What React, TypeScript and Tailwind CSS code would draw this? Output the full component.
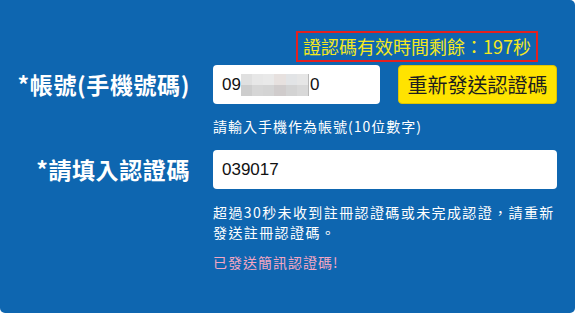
import { useState } from "react"

const FONT = "font-['Microsoft_JhengHei','Noto_Sans_CJK_TC','Noto_Sans',sans-serif]"

// pixelated mask over the middle digits of the phone number
const MASK_CELLS = [
  "#e0e0e0", "#e7e7e7", "#e9e9e9", "#e7e1df", "#e2e4e6", "#e6e6e6",
  "#cdcdcd", "#d6d6d6", "#d4d4d4", "#d0cccc", "#d3d3d3", "#d8d8d8",
]

function MaskedPhone() {
  return (
    <div className="flex h-[39px] w-[167px] items-center rounded-[4px] bg-white pl-[9px] text-[17px] text-[#111] font-['Liberation_Sans',sans-serif]">
      <span>09</span>
      <div className="grid h-[22px] w-[68px] grid-cols-6 border-r border-[#b8b8b8]">
        {MASK_CELLS.map((c, i) => (
          <div key={i} style={{ backgroundColor: c }} />
        ))}
      </div>
      <span className="ml-[1px]">0</span>
    </div>
  )
}

export default function App() {
  const [code, setCode] = useState("039017")

  return (
    <div className={`h-[313px] w-[575px] bg-white ${FONT}`}>
      <div className="flex h-full flex-col rounded-tr-[5px] rounded-b-[5px] bg-[#0e66b0] pt-[31px]">
        <div className="flex justify-end pr-[37px]">
          <div className="flex h-[31px] items-center border-2 border-[#e3201f] px-[5px] text-[18px] text-[#f3e81e]">
            證認碼有效時間剩餘：197秒
          </div>
        </div>

        <div className="mt-[3px] grid grid-cols-[190px_344px] gap-x-[23px]">
          <label className="flex items-center justify-end text-[23px] font-bold tracking-[0.6px] text-white">
            *帳號(手機號碼)
          </label>
          <div className="flex items-center gap-[18px]">
            <MaskedPhone />
            <button className="h-[39px] w-[159px] rounded-[4px] border border-[#e0c400] bg-[#ffe300] text-[20px] text-[#1e1e1e]">
              重新發送認證碼
            </button>
          </div>

          <div />
          <p className="mt-[12px] text-[14px] leading-[20px] tracking-[1px] text-white">
            請輸入手機作為帳號(10位數字)
          </p>

          <label className="mt-[14px] flex items-center justify-end text-[23px] font-bold tracking-[0.6px] text-white">
            *請填入認證碼
          </label>
          <input
            value={code}
            onChange={(e) => setCode(e.target.value)}
            className="mt-[14px] h-[39px] w-full rounded-[4px] bg-white pl-[9px] text-[17px] text-[#111] outline-none font-['Liberation_Sans',sans-serif]"
          />

          <div />
          <p className="mt-[13px] text-[14px] leading-[20px] tracking-[1.4px] text-white">
            超過30秒未收到註冊認證碼或未完成認證，請重新發送註冊認證碼。
          </p>

          <div />
          <p className="mt-[10px] text-[14px] leading-[20px] tracking-[1px] text-[#f4a6c2]">
            已發送簡訊認證碼!
          </p>
        </div>
      </div>
    </div>
  )
}
